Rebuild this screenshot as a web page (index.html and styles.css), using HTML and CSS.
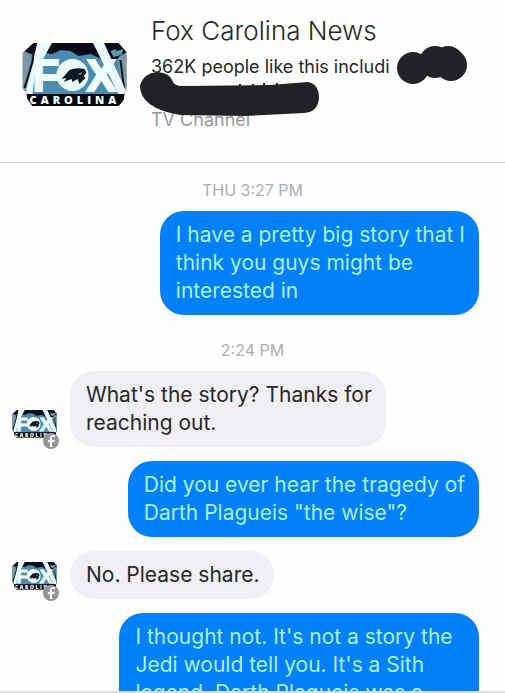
FILE: index.html
```html
<!DOCTYPE html>
<html lang="en">
<head>
    <meta charset="UTF-8">
    <meta name="viewport" content="width=device-width, initial-scale=1.0">
    <title>Fox Carolina News</title>
    <link rel="stylesheet" href="styles.css">
</head>
<body>

<svg class="defs" width="0" height="0" aria-hidden="true">
    <symbol id="logo" viewBox="0 0 106 66">
        <clipPath id="logo-shape"><path d="M11 1H96L104 10V46L101 53V58L96 64H10L5 57V52L0 46V11Z"/></clipPath>
        <g clip-path="url(#logo-shape)">
            <rect width="106" height="66" fill="#0b0d18"/>
            <path d="M0 14L15 10L30 12L38 8L48 9L56 14L68 12L86 20L106 12V53H0Z" fill="#4a8cae"/>
            <path d="M0 8L8 12V52H0ZM96 15L106 9V52H98Z" fill="#7d98a4"/>
            <path d="M15 0H30L19 20H14L10 52H3Z" fill="#e9fafc"/>
            <path d="M12 2L10 20L2 46M98 18L102 50" stroke="#0b0d18" stroke-width="2" fill="none"/>
            <path d="M70 0H81L105 52H96Z" fill="#e9fafc"/>
            <path d="M88 9L93 7L94 9L101 7L99 13L91 15Z" fill="#5d9cae"/>
            <circle cx="50" cy="33" r="16" fill="#effcfd"/>
        </g>
        <text class="logo-fox" x="10" y="49">F</text>
        <text class="logo-fox" x="64" y="49">X</text>
        <path d="M39 37L47 28Q53 25 62 27L64 31L61 34L63 36L57 42L55 37L50 40L49 37L41 40L44 36Z" fill="#101722"/>
        <path d="M55 32L60 30L58 33Z" fill="#5d9cae"/>
        <path d="M4 52H102L101 58L96 64H10L5 57Z" fill="#06070c"/>
        <text class="logo-name" x="7" y="62">CAROLINA</text>
    </symbol>
    <symbol id="badge" viewBox="0 0 16 16">
        <circle cx="8" cy="8" r="8" fill="#97979b"/>
        <path d="M7 14V9H5V7H7V5Q7 2 10 2H12V4H10Q9 4 9 5V7H12L11 9H9V14Z" fill="#fff"/>
    </symbol>
</svg>

<header class="page-header">
    <svg class="page-logo" role="img" aria-label="Fox Carolina"><use href="#logo"/></svg>
    <div class="page-info">
        <h1>Fox Carolina News</h1>
        <p class="likes">362K people like this includi</p>
        <p class="category">TV Channel</p>
    </div>
    <svg class="marker" viewBox="0 0 330 76" aria-hidden="true">
        <path d="M18 26Q29 27 32 34Q34 40 42 40L130 39L168 36Q179 38 179 52Q178 66 164 67L105 70L40 69Q0 62 0 40Q3 27 18 26Z"/>
        <path d="M99 38h2v3h-2zM112 38h2v3h-2zM123 37h2v3h-2zM136 37h2v3h-2z"/>
        <circle cx="273" cy="22" r="16"/>
        <circle cx="295" cy="16" r="16"/>
        <circle cx="311" cy="19" r="16"/>
        <circle cx="308" cy="16" r="16"/>
    </svg>
</header>

<main class="chat">
    <time class="stamp">THU 3:27 PM</time>
    <p class="bubble sent">I have a pretty big story that I<br>think you guys might be<br>interested in</p>

    <time class="stamp later">2:24 PM</time>
    <div class="received-row">
        <div class="avatar">
            <svg class="avatar-logo"><use href="#logo"/></svg>
            <svg class="avatar-badge"><use href="#badge"/></svg>
        </div>
        <p class="bubble received">What's the story? Thanks for<br>reaching out.</p>
    </div>

    <p class="bubble sent">Did you ever hear the tragedy of<br>Darth Plagueis "the wise"?</p>

    <div class="received-row">
        <div class="avatar">
            <svg class="avatar-logo"><use href="#logo"/></svg>
            <svg class="avatar-badge"><use href="#badge"/></svg>
        </div>
        <p class="bubble received">No. Please share.</p>
    </div>

    <p class="bubble sent">I thought not. It's not a story the Jedi would tell you. It's a Sith legend. Darth Plagueis was a</p>
</main>

</body>
</html>
```
FILE: styles.css
```css
* {
    box-sizing: border-box;
}

body {
    margin: 0;
    height: 100vh;
    display: flex;
    flex-direction: column;
    overflow: hidden;
    background: #fefefe;
    color: #27272b;
    font-family: Inter, "Liberation Sans", sans-serif;
}

h1, p {
    margin: 0;
}

.defs {
    position: absolute;
}

/* header */
.page-header {
    position: relative;
    flex: none;
    display: flex;
    align-items: flex-start;
    gap: 22px;
    padding: 14px 22px 28px;
    border-bottom: 1px solid #d6d6d8;
}

.page-logo {
    flex: none;
    width: 107px;
    height: 66px;
    margin-top: 28px;
}

.page-info {
    white-space: nowrap;
}

h1 {
    font-size: 26px;
    font-weight: 300;
    line-height: 34px;
}

.likes {
    margin-top: 5px;
    font-size: 18px;
    line-height: 28px;
}

.category {
    margin-top: 25px;
    font-size: 18px;
    line-height: 28px;
    color: #96959d;
}

/* pen strokes over the names */
.marker {
    position: absolute;
    left: 140px;
    top: 46px;
    width: 330px;
    height: 76px;
    fill: #222125;
}

.logo-fox {
    font-family: "Liberation Sans", sans-serif;
    font-size: 44px;
    font-weight: 700;
    fill: #effcfd;
    stroke: #effcfd;
    stroke-width: 2px;
}

.logo-name {
    font-family: "Open Sans", sans-serif;
    font-size: 11px;
    font-weight: 800;
    letter-spacing: 4px;
    fill: #fff;
}

/* conversation */
.chat {
    flex: 1;
    min-height: 0;
    display: flex;
    flex-direction: column;
    gap: 14px;
    padding: 20px 26px 0 12px;
    overflow: hidden;
    border-bottom: 2px solid #dcdcde;
}

.chat > * {
    flex: none;
}

.stamp {
    align-self: center;
    padding-left: 14px;
    font-size: 16px;
    line-height: 14px;
    color: #adadb3;
}

.later {
    margin-top: 14px;
}

.bubble {
    padding: 10px 14px 10px 16px;
    border-radius: 24px;
    font-size: 21px;
    line-height: 28px;
}

.sent {
    align-self: flex-end;
    max-width: 77%;
    background: #0180f8;
    color: #a9f2fc;
}

.received {
    background: #f0eff4;
}

.received-row {
    display: flex;
    align-items: flex-end;
    gap: 12px;
}

.avatar {
    position: relative;
    flex: none;
    width: 46px;
    padding-bottom: 8px;
}

.avatar-logo {
    display: block;
    width: 46px;
    height: 30px;
}

.avatar-badge {
    position: absolute;
    right: -1px;
    bottom: -2px;
    width: 16px;
    height: 16px;
}
```
